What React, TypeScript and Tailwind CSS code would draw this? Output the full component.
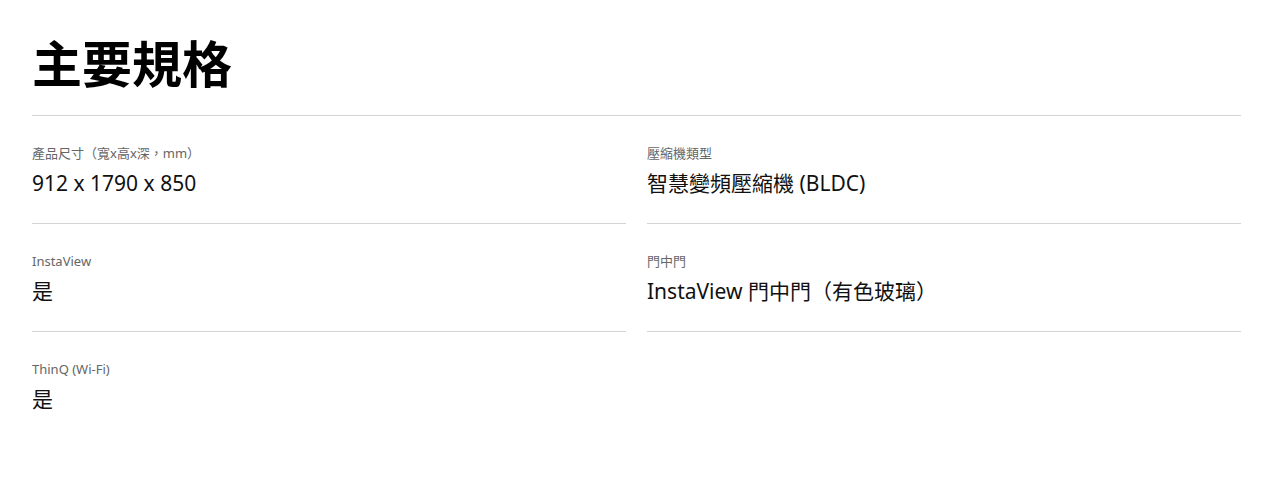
const specs = [
  { label: "產品尺寸（寬x高x深，mm）", value: "912 x 1790 x 850" },
  { label: "壓縮機類型", value: "智慧變頻壓縮機 (BLDC)" },
  { label: "InstaView", value: "是" },
  { label: "門中門", value: "InstaView 門中門（有色玻璃）" },
  { label: "ThinQ (Wi-Fi)", value: "是" },
];

export default function App() {
  return (
    <div
      className="min-h-screen bg-white pl-8 pr-7 pt-[33px] text-black"
      style={{ fontFamily: '"Noto Sans", "Noto Sans CJK TC", sans-serif' }}
    >
      <h1 className="pb-[19px] text-[50px] font-bold leading-[63px] border-b border-[#d4d4d4]">
        主要規格
      </h1>
      <div className="grid grid-cols-2 gap-x-[21px]">
        {specs.map((s, i) => (
          <div
            key={s.label}
            className={`pt-[27px] pb-[25px] ${i === specs.length - 1 ? "" : "border-b border-[#d4d4d4]"}`}
          >
            <p className="text-[13px] leading-5 text-[#666]">{s.label}</p>
            <p className="mt-[5px] text-[21px] leading-[30px] text-[#111]">{s.value}</p>
          </div>
        ))}
      </div>
    </div>
  );
}
